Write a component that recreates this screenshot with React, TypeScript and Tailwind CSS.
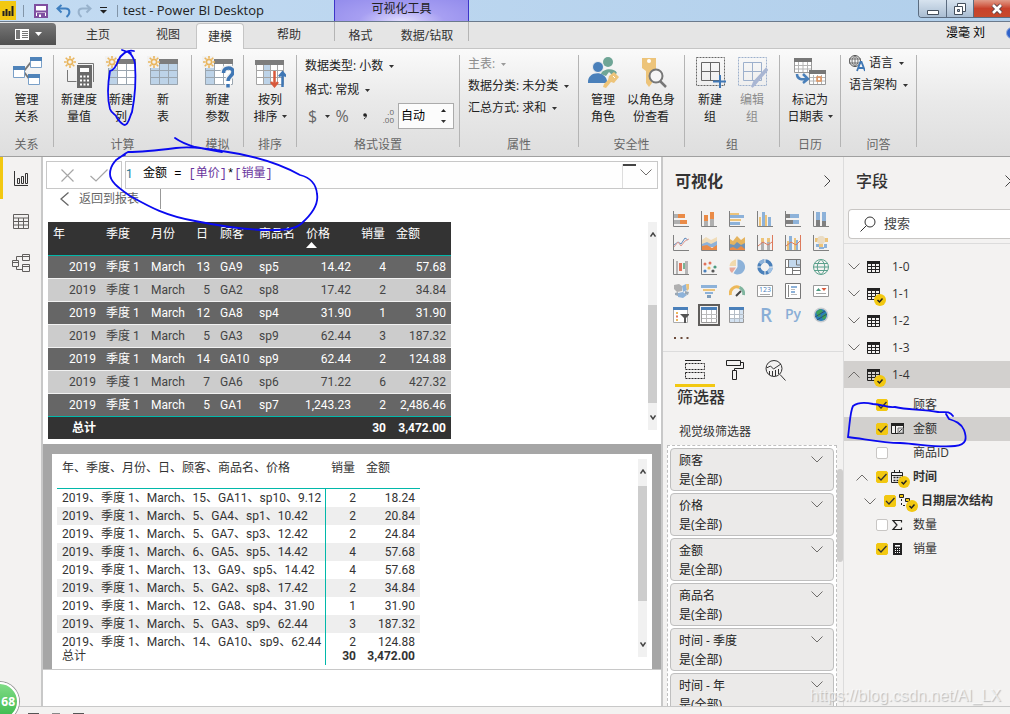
import React from "react";
import clsx from "clsx";

type IconProps = {
    children: React.ReactNode;
    width?: number;
    height?: number;
};

const Icon: React.FC<IconProps> = ({ children, width = 32, height = 32 }): React.ReactElement => (
    <svg width={width} height={height} viewBox={`0 0 ${width} ${height}`} fill="none" className="shrink-0" aria-hidden>
        {children}
    </svg>
);

const Caret: React.FC<{ muted?: boolean }> = ({ muted }): React.ReactElement => (
    <Icon width={5} height={3}>
        <path d="M0 0h5L2.500 3z" fill={muted ? "#9a9a9a" : "#333"} />
    </Icon>
);

const Chevron: React.FC<{ up?: boolean }> = ({ up }): React.ReactElement => (
    <Icon width={12} height={7}>
        <path d={up ? "M.5 6.500L6 1l5.500 5.500" : "M.5 .5L6 6l5.500-5.500"} stroke="#6f6d6b" />
    </Icon>
);

const Spark: React.FC = (): React.ReactElement => (
    <g stroke="#e9b65f" strokeWidth="1.600">
        <circle cx="7" cy="6" r="2.600" />
        <path d="M7 0v2.500M7 9.500V12M1 6h2.500M10.500 6H13M2.700 1.700l1.800 1.800M9.500 8.500l1.800 1.800M11.300 1.700L9.500 3.500M4.500 8.500L2.700 10.300" />
    </g>
);

const Grid: React.FC<{ fill: string; column?: boolean }> = ({ fill, column }): React.ReactElement => (
    <>
        <path d="M3 3h28v26H3z" fill={column ? "#fff" : fill} />
        {column && <path d="M3 8h9v21H3z" fill={fill} />}
        <path d="M3.500 8v20.500h27V8M12.500 8v20M21.500 8v20M4 14.500h27M4 21.500h27" stroke="#9aa5af" />
        <path d="M3 3h28v5H3z" fill="#7d7d7d" />
        <path d="M0 0h12v12H0z" fill="#f2f2f2" />
    </>
);

type RibbonButtonProps = {
    lines: [string, string];
    className: string;
    caret?: boolean;
    disabled?: boolean;
    children: React.ReactNode;
};

const RibbonButton: React.FC<RibbonButtonProps> = (props): React.ReactElement => (
    <button
        type="button"
        disabled={props.disabled}
        className={clsx(
            "flex flex-none flex-col items-center pt-[7px] leading-[17px] whitespace-nowrap",
            props.disabled && "text-[#8c8c8c]",
            props.className
        )}
    >
        <Icon>{props.children}</Icon>
        <span className="mt-[3px]">{props.lines[0]}</span>
        <span className="flex items-center gap-1">
            {props.lines[1]}
            {props.caret && <Caret />}
        </span>
    </button>
);

type RibbonGroupProps = {
    label: string;
    className: string;
    children: React.ReactNode;
};

const RibbonGroup: React.FC<RibbonGroupProps> = (props): React.ReactElement => (
    <>
        <section className={clsx("flex flex-none flex-col justify-between pb-[3px]", props.className)}>
            {props.children}
            <h2 className="text-center leading-4 text-[#666]">{props.label}</h2>
        </section>
        <span className="mt-[6px] h-[92px] w-px flex-none bg-[#b4b4b4]" />
    </>
);

const DropButton: React.FC<{ text: string; muted?: boolean }> = ({ text, muted }): React.ReactElement => (
    <button
        type="button"
        className={clsx("flex h-[22px] items-center gap-[6px] whitespace-nowrap", muted && "text-[#8c8c8c]")}
    >
        {text}
        <Caret muted={muted} />
    </button>
);

const TitleBar: React.FC = (): React.ReactElement => (
    <header className="flex h-[22px] flex-none items-stretch border-b border-[#6b7a8c] bg-linear-to-r from-[#c3dbf2] to-[#b1cfeb]">
        <div className="flex w-[334px] flex-none items-center">
            <Icon width={16} height={19}>
                <path d="M0 0h16v19H0z" fill="#f2c811" />
                <path d="M3.500 10v5M6.500 8v7M9.500 10v5M12.500 5v10" stroke="#222" strokeWidth="2" />
            </Icon>
            <span className="ml-[7px] h-3 w-px bg-[#8295a8]" />
            <button type="button" aria-label="保存" className="ml-[10px]">
                <Icon width={14} height={14}>
                    <path d="M1 1h12v12H1z" fill="#fff" stroke="#7f4fa0" strokeWidth="2" />
                    <path d="M1 7.500h12" stroke="#7f4fa0" strokeWidth="2" />
                    <path d="M3 9h8v4H3zM4 13v-3h3v3" fill="#7f4fa0" />
                    <path d="M5 10.500h2V13H5z" fill="#fff" />
                </Icon>
            </button>
            <button type="button" aria-label="撤消" className="ml-2">
                <Icon width={15} height={14}>
                    <path d="M5.500 1L1.500 4.500l4 4M1.500 4.500h8c5 0 5 5.500 1 8.500" stroke="#3f7fc0" strokeWidth="2" />
                </Icon>
            </button>
            <button type="button" aria-label="恢复" className="ml-[6px]">
                <Icon width={15} height={14}>
                    <path d="M9.500 1l4 3.500-4 4M13.500 4.500h-8c-5 0-5 5.500-1 8.500" stroke="#98b2cc" strokeWidth="2" />
                </Icon>
            </button>
            <button type="button" aria-label="自定义" className="ml-2">
                <Icon width={7} height={7}>
                    <path d="M0 0h7v1H0zM0 3h7L3.500 6.500z" fill="#222" />
                </Icon>
            </button>
            <span className="ml-[10px] h-3 w-px bg-[#8295a8]" />
            <h1 className="ml-[5px] text-[13px] leading-[21px] whitespace-nowrap text-[#222]">test - Power BI Desktop</h1>
        </div>
        <div className="w-[135px] flex-none border-x border-[#3d35c8] bg-[radial-gradient(ellipse_at_bottom,#e2defe_0%,#a79ff2_45%,#938cec_100%)] text-center leading-[18px] text-[#222]">
            可视化工具
        </div>
        <div className="flex flex-1 items-start justify-end">
            <div className="flex h-[18px] w-[92px] overflow-hidden rounded-bl border-b border-l border-[#5b6c80]">
                <button
                    type="button"
                    aria-label="最小化"
                    className="flex w-[28px] items-center justify-center border-r border-[#5b6c80] bg-linear-to-b from-[#d7e3ef] to-[#a9bdd2]"
                >
                    <Icon width={12} height={14}>
                        <path d="M.5 8.500h11v4H.5z" fill="#fff" stroke="#444f5c" />
                    </Icon>
                </button>
                <button
                    type="button"
                    aria-label="还原"
                    className="flex w-[27px] items-center justify-center border-r border-[#5b6c80] bg-linear-to-b from-[#d7e3ef] to-[#a9bdd2]"
                >
                    <Icon width={12} height={12}>
                        <path d="M3.500 .5h8v8h-8z" fill="#fff" stroke="#444f5c" />
                        <path d="M.5 3.500h8v8h-8z" fill="#fff" stroke="#444f5c" />
                        <path d="M3.500 6.500h2v2h-2z" fill="#a9bdd2" stroke="#444f5c" />
                    </Icon>
                </button>
                <button
                    type="button"
                    aria-label="关闭"
                    className="flex flex-1 items-center justify-center bg-linear-to-b from-[#e09a88] via-[#c8412b] to-[#c64a2c] pl-[10px]"
                >
                    <Icon width={12} height={12}>
                        <path d="M2 2l8 8M10 2l-8 8" stroke="#5a4145" strokeWidth="4.500" />
                        <path d="M2 2l8 8M10 2l-8 8" stroke="#fff" strokeWidth="2.600" />
                    </Icon>
                </button>
            </div>
        </div>
    </header>
);

const TabRow: React.FC = (): React.ReactElement => (
    <nav className="flex h-[27px] flex-none border-b border-[#c5c5c5] bg-[#e5e5e5]">
        <button
            type="button"
            aria-label="文件"
            className="mt-px flex h-[22px] w-14 flex-none items-center justify-center gap-[6px] rounded-tr-sm bg-linear-to-b from-[#777] to-[#505050]"
        >
            <Icon width={14} height={11}>
                <path d="M0 0h14v11H0z" fill="#fff" />
                <path d="M1 1h4v9H1z" fill="#777" />
                <path d="M7 2.500h6M7 4.500h6M7 6.500h6M7 8.500h6" stroke="#777" />
            </Icon>
            <Icon width={7} height={4}>
                <path d="M0 0h7L3.500 4z" fill="#fff" />
            </Icon>
        </button>
        <button type="button" className="w-[84px] flex-none">
            主页
        </button>
        <button type="button" className="w-14 flex-none">
            视图
        </button>
        <button
            type="button"
            className="mt-px -mb-px w-12 flex-none rounded-t border border-b-0 border-[#c5c5c5] bg-[#fafafa]"
        >
            建模
        </button>
        <button type="button" className="w-[90px] flex-none">
            帮助
        </button>
        <div className="mb-[7px] flex flex-none border-x border-[#b4b4b4]">
            <button type="button" className="mt-[6px] w-[51px]">
                格式
            </button>
            <button type="button" className="mt-[6px] w-[82px]">
                数据/钻取
            </button>
        </div>
        <div className="-mr-1 flex flex-1 items-center justify-end gap-[21px] overflow-hidden pb-1">
            <span className="whitespace-nowrap text-black">漫毫 刘</span>
            <Icon width={8} height={12}>
                <circle cx="6" cy="6" r="5.500" fill="#2f62c9" stroke="#8fa9dd" />
            </Icon>
        </div>
    </nav>
);

const Ribbon: React.FC = (): React.ReactElement => (
    <div className="flex h-[108px] flex-none border-b border-[#a0a0a0] bg-linear-to-b from-[#fafafa] via-[#e9e9e9] to-[#dedede] text-[#222]">
        <RibbonGroup label="关系" className="w-[53px]">
            <RibbonButton lines={["管理", "关系"]} className="w-full">
                <path d="M13 15l7-9M13 16l6 8" stroke="#777" strokeWidth="2" />
                <path d="M19.500 1.500h11v10h-11zM2.500 10.500h11v11h-11zM17.500 18.500h11v10h-11z" fill="#fff" stroke="#7aa0c8" />
                <path d="M19 1h12v4H19zM2 10h12v4H2zM17 18h12v4H17z" fill="#4f83b9" />
            </RibbonButton>
        </RibbonGroup>
        <RibbonGroup label="计算" className="w-[137px]">
            <div className="flex pl-1">
                <RibbonButton lines={["新建度", "量值"]} className="w-[42px]">
                    <Spark />
                    <path d="M4.500 14v11.500h9M15 7.500h15.500V26" stroke="#777" />
                    <path d="M14 9h15v23H14z" fill="#6a6a6a" />
                    <path d="M17 12h9v4h-9z" fill="#fff" />
                    <path d="M17 20.500h9M17 24.500h9M17 28.500h9" stroke="#fff" strokeWidth="2" strokeDasharray="2 1.500" />
                </RibbonButton>
                <RibbonButton lines={["新建", "列"]} className="w-[42px]">
                    <Grid fill="#bdd3e8" column />
                    <Spark />
                </RibbonButton>
                <RibbonButton lines={["新", "表"]} className="w-[42px]">
                    <Grid fill="#bdd3e8" />
                    <Spark />
                </RibbonButton>
            </div>
        </RibbonGroup>
        <RibbonGroup label="模拟" className="w-[51px]">
            <RibbonButton lines={["新建", "参数"]} className="w-full">
                <Grid fill="#bdd3e8" column />
                <Spark />
                <path d="M21 17c0-7 10-7 10-1 0 4-5 4-5 9M26 28v4" stroke="#f0f0f0" strokeWidth="6" />
                <path d="M21.500 17c0-7 10-6 9.500-1 0 4-5 4-5 9M26 28v3.500" stroke="#3f77b5" strokeWidth="3.500" />
            </RibbonButton>
        </RibbonGroup>
        <RibbonGroup label="排序" className="w-[52px]">
            <RibbonButton lines={["按列", "排序"]} className="w-full" caret>
                <path d="M2 4h28v24H2z" fill="#fff" />
                <path d="M9 8h7v20H9z" fill="#bdd3e8" />
                <path d="M2.500 8v20.500h27V8M9.500 8v20M16.500 8v20M23.500 8v20M3 14.500h27M3 21.500h27" stroke="#a5a5a5" />
                <path d="M1 4h29v5H1z" fill="#7d7d7d" />
                <path d="M20.500 15v15M17 26l3.500 4 3.500-4" stroke="#d8593b" strokeWidth="2.500" />
                <path d="M28.500 31V17M25 20.500l3.500-4 3.500 4" stroke="#3f77b5" strokeWidth="2.500" />
            </RibbonButton>
        </RibbonGroup>
        <RibbonGroup label="格式设置" className="w-[162px]">
            <div className="pt-[6px] pl-2">
                <DropButton text="数据类型: 小数" />
                <div className="pt-[2px]">
                    <DropButton text="格式: 常规" />
                </div>
                <div className="mt-[2px] flex h-[26px] items-center text-base leading-[26px] text-[#666]">
                    <button type="button" className="flex w-7 items-center gap-2 pl-[3px]">
                        $<Caret />
                    </button>
                    <button type="button" className="ml-[1px] w-4">
                        %
                    </button>
                    <button type="button" aria-label="千位分隔符" className="ml-[10px] w-[10px]">
                        <Icon width={10} height={12}>
                            <circle cx="5" cy="5" r="1.800" fill="#222" />
                            <path d="M6.300 5c.3 2-.8 3.200-2.300 4" stroke="#222" />
                        </Icon>
                    </button>
                    <label htmlFor="decimals" className="ml-[9px] flex w-[19px] flex-col pr-1 text-right text-[8px] leading-[8px]">
                        <span>.0</span>
                        <span>.00</span>
                    </label>
                    <div className="flex h-[26px] w-14 items-center border border-[#ababab] bg-[#fcfcfc] pl-[2px]">
                        <input id="decimals" defaultValue="自动" className="w-10 min-w-0 text-xs text-black outline-none" />
                        <div className="flex flex-col gap-2">
                            <button type="button" aria-label="增加">
                                <Icon width={5} height={3}>
                                    <path d="M0 3h5L2.500 0z" fill="#222" />
                                </Icon>
                            </button>
                            <button type="button" aria-label="减少">
                                <Caret />
                            </button>
                        </div>
                    </div>
                </div>
            </div>
        </RibbonGroup>
        <RibbonGroup label="属性" className="w-[118px]">
            <div className="pt-1 pl-2">
                <DropButton text="主表: " muted />
                <DropButton text="数据分类: 未分类" />
                <DropButton text="汇总方式: 求和" />
            </div>
        </RibbonGroup>
        <RibbonGroup label="安全性" className="w-[105px]">
            <div className="flex">
                <RibbonButton lines={["管理", "角色"]} className="w-12">
                    <circle cx="21" cy="6" r="5" fill="#6fa596" />
                    <path d="M14 18c2-6 14-6 16-1l-4 3-4-4-3 4z" fill="#6fa596" />
                    <circle cx="11" cy="11" r="5.500" fill="#4a80ba" stroke="#f0f0f0" />
                    <path d="M1 27c-1-12 17-13 19-2v2z" fill="#4a80ba" />
                    <path d="M27 16l5 5-5 6-3-1-5 6-3-1 1-3 4-4 1-4z" fill="#edc47a" />
                    <path d="M26 20l2 2" stroke="#fff" />
                </RibbonButton>
                <RibbonButton lines={["以角色身", "份查看"]} className="w-12">
                    <path d="M7 2h14v11l-4 2v12l-3 4-3-4V15l-4-3z" fill="#edc47a" />
                    <circle cx="14" cy="5" r="2" fill="#fff" />
                    <circle cx="21" cy="20" r="6.500" fill="#f6f6f6" stroke="#777" strokeWidth="2" />
                    <path d="M25 25l6 6" stroke="#777" strokeWidth="2.500" />
                </RibbonButton>
            </div>
        </RibbonGroup>
        <RibbonGroup label="组" className="w-[94px]">
            <div className="flex pl-1">
                <RibbonButton lines={["新建", "组"]} className="w-[42px]">
                    <path d="M2.500 1.500h28v28h-28z" stroke="#666" strokeDasharray="2 1" />
                    <path d="M7.500 6.500h18v18h-18zM16.500 7v17M8 15.500h18" stroke="#666" />
                    <path d="M26 19v13M19 25.500h13" stroke="#3f77b5" strokeWidth="2" />
                </RibbonButton>
                <RibbonButton lines={["编辑", "组"]} className="w-[42px]" disabled>
                    <path d="M2.500 1.500h28v28h-28z" stroke="#9db0cc" strokeDasharray="2 1" />
                    <path d="M7.500 6.500h18v18h-18zM16.500 7v17M8 15.500h18" stroke="#9db0cc" />
                    <path d="M31 14L20 27l-4 4 2-5 12-13z" fill="#a9b6d3" stroke="#a9b6d3" strokeWidth="2" />
                </RibbonButton>
            </div>
        </RibbonGroup>
        <RibbonGroup label="日历" className="w-[60px]">
            <RibbonButton lines={["标记为", "日期表"]} className="w-full" caret>
                <path d="M.5 2.500h17v14H.5zM15.500 15.500h16v13h-16z" fill="#fff" stroke="#999" />
                <path d="M4.500 6v10M9 6v10M13.500 6v10M1 9.500h16M1 13h16M19.500 19v9M23.500 19v9M27.500 19v9M16 21.500h15M16 25h15" stroke="#b5b5b5" />
                <path d="M0 2h18v4H0zM15 14h17v4H15z" fill="#777" />
                <path d="M23 21h4v4h-4z" stroke="#e0915b" strokeWidth="1.500" />
                <path d="M3 18c0 5 4 6 10 5M9 18l5 5-5 4" stroke="#4a80ba" strokeWidth="2.500" />
            </RibbonButton>
        </RibbonGroup>
        <RibbonGroup label="问答" className="w-[75px]">
            <div className="pt-[3px] pl-2">
                <div className="flex items-center gap-1">
                    <Icon width={16} height={17}>
                        <circle cx="6" cy="6" r="5.500" stroke="#555" />
                        <path d="M6 .5c-4 3-4 8 0 11M6 .5c4 3 4 8 0 11M0 4h12M0 8h12M6 0v12" stroke="#555" strokeWidth=".8" />
                        <path d="M8 16l3.500-9h1L16 16M9.500 13h5" stroke="#3f77b5" strokeWidth="1.800" />
                    </Icon>
                    <DropButton text="语言" />
                </div>
                <DropButton text="语言架构" />
            </div>
        </RibbonGroup>
    </div>
);

const NavRail: React.FC = (): React.ReactElement => (
    <aside className="flex w-[43px] flex-none flex-col border-r-2 border-[#c8c8c8] bg-[#f3f2f1]">
        <button
            type="button"
            aria-label="报表"
            className="flex h-[42px] items-center justify-center border-l-3 border-[#f2c811] pr-[3px]"
        >
            <Icon width={14} height={15}>
                <path d="M.5 0v14.500H14M3.500 7.500h2v5h-2zM7.500 5.500h2v7h-2zM11.500 2.500h2v10h-2z" stroke="#333" />
            </Icon>
        </button>
        <button type="button" aria-label="数据" className="flex h-[44px] items-center justify-center">
            <Icon width={16} height={15}>
                <path d="M.5 .5h15v14H.5zM.5 4h15M.5 7.500h15M.5 11h15M5.500 4v11M10.500 4v11" stroke="#605e5c" />
            </Icon>
        </button>
        <button type="button" aria-label="模型" className="flex h-10 items-center justify-center">
            <Icon width={18} height={18}>
                <path
                    d="M10.500 .5h7v6h-7zM10.500 2.500h7M.5 6.500h6v6h-6zM.5 8.500h6M10.500 10.500h7v7h-7zM10.500 12.500h7M4.500 6.500v-4h6M4.500 12.500v3h6"
                    stroke="#605e5c"
                />
            </Icon>
        </button>
    </aside>
);

const salesColumns = ["年", "季度", "月份", "日", "顾客", "商品名", "价格", "销量", "金额"];

const salesRows = [
    ["2019", "季度 1", "March", "13", "GA9", "sp5", "14.42", "4", "57.68"],
    ["2019", "季度 1", "March", "5", "GA2", "sp8", "17.42", "2", "34.84"],
    ["2019", "季度 1", "March", "12", "GA8", "sp4", "31.90", "1", "31.90"],
    ["2019", "季度 1", "March", "5", "GA3", "sp9", "62.44", "3", "187.32"],
    ["2019", "季度 1", "March", "14", "GA10", "sp9", "62.44", "2", "124.88"],
    ["2019", "季度 1", "March", "7", "GA6", "sp6", "71.22", "6", "427.32"],
    ["2019", "季度 1", "March", "5", "GA1", "sp7", "1,243.23", "2", "2,486.46"],
];

const isNumberColumn = (index: number): boolean => [0, 3, 6, 7, 8].includes(index);

const SalesTable: React.FC = (): React.ReactElement => (
    <table className="w-[403px] table-fixed border-separate border-spacing-0 whitespace-nowrap">
        <colgroup>
            <col className="w-[53px]" />
            <col className="w-[45px]" />
            <col className="w-[45px]" />
            <col className="w-[24px]" />
            <col className="w-[39px]" />
            <col className="w-[47px]" />
            <col className="w-[55px]" />
            <col className="w-[35px]" />
            <col className="w-[60px]" />
        </colgroup>
        <thead className="bg-[#333] text-white">
            <tr className="h-[34px]">
                {salesColumns.map((name) => (
                    <th
                        key={name}
                        className="border-b border-[#01b8aa] px-[5px] pt-1 text-left align-top font-normal"
                    >
                        <span className="block leading-4">{name}</span>
                        {name === "价格" && (
                            <Icon width={11} height={6}>
                                <path d="M0 6h11L5.500 0z" fill="#fff" />
                            </Icon>
                        )}
                    </th>
                ))}
            </tr>
        </thead>
        <tbody>
            {salesRows.map((row, rowIndex) => (
                <tr
                    key={rowIndex}
                    className={clsx("h-[23px]", rowIndex % 2 === 0 ? "bg-[#666] text-white" : "bg-[#ccc] text-[#444]")}
                >
                    {row.map((cell, index) => (
                        <td
                            key={index}
                            className={clsx(
                                "border-b px-1 leading-[18px]",
                                rowIndex === salesRows.length - 1 ? "border-[#01b8aa]" : "border-[#f2f2f2]",
                                isNumberColumn(index) ? "pr-[5px] text-right" : "pl-[5px]"
                            )}
                        >
                            {cell}
                        </td>
                    ))}
                </tr>
            ))}
        </tbody>
        <tfoot className="bg-[#333] font-bold text-white">
            <tr className="h-[22px]">
                <td className="px-[5px] text-right leading-[18px]">总计</td>
                <td colSpan={6} />
                <td className="px-[5px] text-right leading-[18px]">30</td>
                <td className="px-[5px] text-right leading-[18px]">3,472.00</td>
            </tr>
        </tfoot>
    </table>
);

const pivotRows = [
    ["2019、季度 1、March、15、GA11、sp10、9.12", "2", "18.24"],
    ["2019、季度 1、March、5、GA4、sp1、10.42", "2", "20.84"],
    ["2019、季度 1、March、5、GA7、sp3、12.42", "2", "24.84"],
    ["2019、季度 1、March、6、GA5、sp5、14.42", "4", "57.68"],
    ["2019、季度 1、March、13、GA9、sp5、14.42", "4", "57.68"],
    ["2019、季度 1、March、5、GA2、sp8、17.42", "2", "34.84"],
    ["2019、季度 1、March、12、GA8、sp4、31.90", "1", "31.90"],
    ["2019、季度 1、March、5、GA3、sp9、62.44", "3", "187.32"],
    ["2019、季度 1、March、14、GA10、sp9、62.44", "2", "124.88"],
];

const PivotColumns: React.FC = (): React.ReactElement => (
    <colgroup>
        <col className="w-[269px]" />
        <col className="w-[35px]" />
        <col className="w-[59px]" />
    </colgroup>
);

const PivotTable: React.FC = (): React.ReactElement => (
    <div className="w-[363px] text-[#333]">
        <div className="h-[188px] overflow-hidden">
            <table className="w-full table-fixed border-separate border-spacing-0 whitespace-nowrap">
                <PivotColumns />
                <thead>
                    <tr className="h-[30px]">
                        {["年、季度、月份、日、顾客、商品名、价格", "销量", "金额"].map((name) => (
                            <th
                                key={name}
                                className="border-b border-[#01b8aa] px-[5px] text-left align-top leading-[18px] font-normal"
                            >
                                {name}
                            </th>
                        ))}
                    </tr>
                </thead>
                <tbody>
                    {pivotRows.map((row) => (
                        <tr key={row[0]} className="h-[18px] leading-[18px] even:bg-[#eee]">
                            <td className="border-r border-[#01b8aa] pl-[5px]">{row[0]}</td>
                            <td className="px-[5px] text-right">{row[1]}</td>
                            <td className="px-[5px] text-right">{row[2]}</td>
                        </tr>
                    ))}
                </tbody>
            </table>
        </div>
        <table className="w-full table-fixed border-separate border-spacing-0 leading-[18px]">
            <PivotColumns />
            <tbody>
                <tr>
                    <td className="border-r border-[#01b8aa] px-[5px]">总计</td>
                    <td className="px-[5px] text-right font-bold">30</td>
                    <td className="px-[5px] text-right font-bold">3,472.00</td>
                </tr>
            </tbody>
        </table>
    </div>
);

const ScrollBar: React.FC<{ thumbClass: string; className: string }> = (props): React.ReactElement => (
    <div className={clsx("flex w-[9px] flex-none flex-col items-center bg-[#f1f1f1] py-[10px]", props.className)}>
        <Icon width={6} height={5}>
            <path d="M.5 4.500L3 1l2.500 3.500" stroke="#444" strokeWidth="1.500" />
        </Icon>
        <div className="flex w-full flex-1 flex-col">
            <div className={clsx("w-full bg-[#cdcdcd]", props.thumbClass)} />
        </div>
        <Icon width={6} height={5}>
            <path d="M.5 .5L3 4 5.500 .5" stroke="#444" strokeWidth="1.500" />
        </Icon>
    </div>
);

const Canvas: React.FC = (): React.ReactElement => (
    <main className="flex min-w-0 flex-1 flex-col border-r-2 border-[#c8c8c8] bg-white">
        <div className="mt-1 flex h-7 flex-none gap-[3px] pr-[3px] pl-[3px]">
            <div className="flex w-[76px] flex-none items-center justify-center gap-4 border border-[#c8c8c8]">
                <button type="button" aria-label="取消">
                    <Icon width={13} height={13}>
                        <path d="M.5 .5l12 12M12.500 .5l-12 12" stroke="#a6a6a6" strokeWidth="1.200" />
                    </Icon>
                </button>
                <button type="button" aria-label="提交">
                    <Icon width={18} height={13}>
                        <path d="M.5 7l5.500 5L17.500 .5" stroke="#a6a6a6" strokeWidth="1.200" />
                    </Icon>
                </button>
            </div>
            <div className="flex min-w-0 flex-1 border border-[#c8c8c8] bg-[#fefefe]">
                <span className="w-[17px] flex-none pt-1 leading-4 text-[#237893]">1</span>
                <div
                    role="textbox"
                    aria-label="公式"
                    contentEditable
                    suppressContentEditableWarning
                    className="flex-1 pt-1 font-['Liberation_Mono','Noto_Sans_CJK_SC',monospace] leading-4 whitespace-pre text-black outline-none"
                >
                    金额 = <span className="text-[#68349c]">[单价]</span>*<span className="text-[#68349c]">[销量]</span>
                </div>
                <div className="mt-[2px] flex w-[35px] flex-none border-l border-[#ddd]">
                    <span className="h-[2px] w-[13px] bg-[#444]" />
                    <button type="button" aria-label="展开公式栏" className="mb-2 ml-1">
                        <Chevron />
                    </button>
                </div>
            </div>
        </div>
        <div className="flex h-[33px] flex-none">
            <button
                type="button"
                className="flex h-[20px] w-[118px] flex-none items-center gap-[10px] border-r border-[#999] pl-[17px] whitespace-nowrap text-[#666]"
            >
                <Icon width={9} height={14}>
                    <path d="M8.500 .5L1 7l7.500 6.500" stroke="#666" strokeWidth="1.300" />
                </Icon>
                返回到报表
            </button>
        </div>
        <div className="flex h-[222px] flex-none items-start justify-between pr-1 pl-[5px]">
            <SalesTable />
            <ScrollBar className="h-[208px]" thumbClass="mt-[68px] h-[98px]" />
        </div>
        <div className="flex-none border-b border-[#c8c8c8] bg-[#a6a6a6] px-[9px] pt-[10px]">
            <div className="flex h-[215px] items-start justify-between bg-white px-[5px] pt-[5px]">
                <PivotTable />
                <ScrollBar className="h-[198px]" thumbClass="mt-3 h-[115px]" />
            </div>
        </div>
    </main>
);

const axis = <path d="M.5 0v15.500H16" stroke="#808080" />;

const visuals: { name: string; art: React.ReactNode }[] = [
    {
        name: "堆积条形图",
        art: (
            <>
                <path d="M1 3h4v4H1zM1 9h6v4H1z" fill="#b0b0b0" />
                <path d="M5 3h7v4H5zM7 9h7v4H7z" fill="#ea8b47" />
                {axis}
            </>
        ),
    },
    {
        name: "堆积柱形图",
        art: (
            <>
                <path d="M3 10h4v5H3zM9 8h4v7H9z" fill="#b0b0b0" />
                <path d="M3 4h4v6H3zM9 1h4v7H9z" fill="#ea8b47" />
                {axis}
            </>
        ),
    },
    {
        name: "簇状条形图",
        art: (
            <>
                <path d="M1 2h9v2H1zM1 8h11v2H1z" fill="#edc47a" />
                <path d="M1 4h14v3H1zM1 11h10v3H1z" fill="#8db2d9" />
                {axis}
            </>
        ),
    },
    {
        name: "簇状柱形图",
        art: (
            <>
                <path d="M2 6h2v9H2zM8 4h2v11H8z" fill="#edc47a" />
                <path d="M5 1h3v14H5zM11 6h3v9h-3z" fill="#8db2d9" />
                {axis}
            </>
        ),
    },
    {
        name: "百分比堆积条形图",
        art: (
            <>
                <path d="M1 3h4v4H1zM1 9h7v4H1z" fill="#808080" />
                <path d="M5 3h9v4H5zM8 9h6v4H8z" fill="#8db2d9" />
                {axis}
            </>
        ),
    },
    {
        name: "百分比堆积柱形图",
        art: (
            <>
                <path d="M3 9h4v6H3zM9 10h4v5H9z" fill="#808080" />
                <path d="M3 1h4v8H3zM9 1h4v9H9z" fill="#8db2d9" />
                {axis}
            </>
        ),
    },
    {
        name: "折线图",
        art: (
            <>
                <path d="M1 10l4-3 3 2 4-6 3 2" stroke="#5b87ba" />
                <path d="M1 12l4-5 3 4 4-5 4-2" stroke="#dd9a92" />
                {axis}
            </>
        ),
    },
    {
        name: "分区图",
        art: (
            <>
                <path d="M1 5l4-3 5 3 6-3v9H1z" fill="#f0dcb8" />
                <path d="M1 9l5-2 4 2 6-3v6H1z" fill="#8db2d9" />
                <path d="M1 11l5-1 5 3 5-3v5H1z" fill="#ea8b47" />
                {axis}
            </>
        ),
    },
    {
        name: "堆积面积图",
        art: (
            <>
                <path d="M1 4l3 2 4-5 4 4 4-3v13H1z" fill="#e5b45f" />
                <path d="M1 9l4 1 3-3 4 3 4-2v7H1z" fill="#6f93b8" />
                <path d="M1 13l3-1 4 2 4-3 4 3v1H1z" fill="#ea8b47" />
                {axis}
            </>
        ),
    },
    {
        name: "折线和堆积柱形图",
        art: (
            <>
                <path d="M4 3h3v4H4zM10 3h3v4h-3z" fill="#edc47a" />
                <path d="M4 7h3v8H4zM10 7h3v8h-3z" fill="#b0b0b0" />
                <path d="M1 11l5-4 5 3 4-3M15.500 0v16" stroke="#dd7a5c" />
                {axis}
            </>
        ),
    },
    {
        name: "折线和簇状柱形图",
        art: (
            <>
                <path d="M2 6h2v9H2zM9 3h2v12H9z" fill="#edc47a" />
                <path d="M4 1h3v14H4zM11 5h2v10h-2z" fill="#8db2d9" />
                <path d="M1 11l5-4 5 3 4-4M15.500 0v16" stroke="#dd7a5c" />
                {axis}
            </>
        ),
    },
    {
        name: "功能区图表",
        art: (
            <>
                <path d="M2 3h3v4H2zM6 9h4v3H6zM11 3h4v4h-4z" fill="#edc47a" />
                <path d="M3 9h3v3H3zM6 12h5v2H6zM11 9h3v4h-3z" fill="#8db2d9" />
                <path d="M5 2l2-1h3l2 2v4l-2 2H6L4 7z" fill="#eadcc4" />
                {axis}
            </>
        ),
    },
    {
        name: "瀑布图",
        art: (
            <>
                <path d="M3 2h2v13H3zM12 2h3v13h-3z" fill="#b5b5b5" />
                <path d="M6 4h3v8H6z" fill="#e1725a" />
                <path d="M10 4h2v6h-2z" fill="#79b394" />
                {axis}
            </>
        ),
    },
    {
        name: "散点图",
        art: (
            <>
                <circle cx="4" cy="5" r="1.500" fill="#e1725a" />
                <circle cx="9" cy="4" r="1.500" fill="#e1725a" />
                <circle cx="8" cy="9" r="1.600" fill="#edb95a" />
                <circle cx="14" cy="8" r="1.600" fill="#4c9a80" />
                <circle cx="4" cy="12" r="1.600" fill="#4a80ba" />
                <circle cx="12" cy="12" r="1.600" fill="#555" />
                {axis}
            </>
        ),
    },
    {
        name: "饼图",
        art: (
            <>
                <path d="M8.500 8V.5a7.500 7.500 0 11-4 13.800z" fill="#8db2d9" />
                <path d="M7 7H.5C1 3 4 1 7 .5z" fill="#f0d9ad" />
                <path d="M7 8.500l-4 5.500C1 12.500.5 11 .5 8.500z" fill="#e8a79a" />
            </>
        ),
    },
    {
        name: "环形图",
        art: (
            <>
                <circle cx="8" cy="8" r="6" stroke="#4a80ba" strokeWidth="3.500" />
                <path d="M3 4.500A6 6 0 018 2" stroke="#8db2d9" strokeWidth="3.500" />
                <path d="M14 8a6 6 0 01-3 5" stroke="#9ec1e5" strokeWidth="3.500" />
                <path d="M8 0v4M0 8h4M12 8h4M8 12v4" stroke="#f3f2f1" />
            </>
        ),
    },
    {
        name: "树状图",
        art: (
            <>
                <path d="M.5 .5h15v15H.5z" fill="#fff" stroke="#777" />
                <path d="M4 1h11v7H4z" fill="#c2d7ec" />
                <path d="M3.500 1v8M1 8.500h15M11.500 1v5H15M7.500 9v6M8 11.500h8" stroke="#777" />
            </>
        ),
    },
    {
        name: "地图",
        art: (
            <path
                d="M8 .5a7.500 7.500 0 100 15 7.500 7.500 0 000-15zM8 .5c-5 4-5 11 0 15M8 .5c5 4 5 11 0 15M1.500 4.500h13M.5 8h15M1.500 11.500h13"
                stroke="#5ba08c"
            />
        ),
    },
    {
        name: "着色地图",
        art: (
            <>
                <path d="M1 2l5-1 3 2v5L4 9 1 6z" fill="#b0b0b0" />
                <path d="M9 3l4-2 1 6-4 2zM5 10l5-1 4 3-4 3-5-1z" fill="#8db2d9" />
                <path d="M13 1h3v5l-2 2z" fill="#edc47a" />
                <path d="M2 10l3-1v4l-3-1zM12 8l4 1-1 3-3-1z" fill="#9aa7b3" />
            </>
        ),
    },
    {
        name: "漏斗图",
        art: (
            <>
                <path d="M0 2h16v3H0zM4 9h8v2H4z" fill="#8db2d9" />
                <path d="M2 6h12v2H2z" fill="#edc47a" />
                <path d="M6 12h4v3H6z" fill="#7e9dbb" />
            </>
        ),
    },
    {
        name: "仪表",
        art: (
            <>
                <path d="M1.500 12a6.500 6.500 0 019-7.500" stroke="#edb95a" strokeWidth="3" />
                <path d="M10.500 4.500A6.500 6.500 0 0114.500 12" stroke="#80b59f" strokeWidth="3" />
                <path d="M7 13l5-5" stroke="#444" strokeWidth="2" />
            </>
        ),
    },
    {
        name: "卡片图",
        art: (
            <>
                <path d="M.5 2.500h15v11H.5z" fill="#fff" stroke="#999" />
                <text x="8" y="9" textAnchor="middle" fontSize="7" fill="#4a80ba">
                    123
                </text>
                <path d="M3 11.500h10" stroke="#aaa" />
            </>
        ),
    },
    {
        name: "多行卡",
        art: (
            <>
                <path d="M.5 .5h15v15H.5z" fill="#fff" stroke="#777" />
                <path d="M3.500 2v12" stroke="#888" />
                <path d="M6 4h6M6 9h4" stroke="#8db2d9" strokeWidth="2" />
                <path d="M6 6.500h4M6 11.500h6" stroke="#bbb" />
            </>
        ),
    },
    {
        name: "KPI",
        art: (
            <>
                <path d="M.5 2.500h15v11H.5z" fill="#fff" stroke="#999" />
                <path d="M3 8l2.500-3L8 8z" fill="#4c9a80" />
                <path d="M8.500 5h5L11 8z" fill="#d8593b" />
                <path d="M3 10.500h10" stroke="#aaa" />
            </>
        ),
    },
    {
        name: "切片器",
        art: (
            <>
                <path d="M.5 .5h14v15H.5z" fill="#fff" stroke="#aaa" />
                <path d="M0 0h15v3H0z" fill="#4a80ba" />
                <path d="M3 5h2v2H3zM3 12h2v2H3z" fill="#edb95a" />
                <path d="M3 8.500h2v2H3z" fill="#e1725a" />
                <path d="M7 7h10l-4 4v5h-2v-5z" fill="#555" />
            </>
        ),
    },
    {
        name: "表",
        art: (
            <>
                <path d="M.5 .5h15v15H.5z" fill="#fff" stroke="#999" />
                <path d="M5.500 3v12M10.500 3v12M1 7.500h15M1 11.500h15" stroke="#bbb" />
                <path d="M0 0h16v3H0z" fill="#4a80ba" />
            </>
        ),
    },
    {
        name: "矩阵",
        art: (
            <>
                <path d="M.5 .5h14v15H.5z" fill="#d3e2f1" stroke="#999" />
                <path d="M1 3h9v8H1z" fill="#fff" />
                <path d="M5.500 3v12M10.500 3v12M1 7.500h14M1 11.500h14" stroke="#b5bdc6" />
                <path d="M0 0h15v3H0z" fill="#4a80ba" />
            </>
        ),
    },
    {
        name: "R 脚本视觉对象",
        art: (
            <text x="9" y="15" textAnchor="middle" fontSize="19" fontWeight="600" fill="#8aaed6">
                R
            </text>
        ),
    },
    {
        name: "Python 视觉对象",
        art: (
            <text x="8" y="12" textAnchor="middle" fontSize="14" fontWeight="600" fill="#8aaed6">
                Py
            </text>
        ),
    },
    {
        name: "ArcGIS 地图",
        art: (
            <>
                <circle cx="8" cy="8" r="7.500" fill="#c9cdd0" />
                <circle cx="8" cy="8" r="6" fill="#2a7db8" />
                <path d="M3 5l4-3 3 2-3 3 1 2-3 1zM9 9l4-3v5l-3 2z" fill="#3fa35c" />
                <path d="M2 10l10-6M4 13l10-6" stroke="#2d4a5e" strokeWidth=".8" />
            </>
        ),
    },
];

const filters = ["顾客", "价格", "金额", "商品名", "时间 - 季度", "时间 - 年"];

const VisualPane: React.FC = (): React.ReactElement => (
    <aside className="flex w-[180px] flex-none flex-col overflow-hidden bg-[#f3f2f1]">
        <div className="mt-3 flex flex-none items-center justify-between pr-3 pl-3 leading-5">
            <h2 className="text-base font-bold text-[#333]">可视化</h2>
            <button type="button" aria-label="折叠可视化">
                <Icon width={7} height={12}>
                    <path d="M.5 .5L6 6l-5.500 5.500" stroke="#444" />
                </Icon>
            </button>
        </div>
        <div className="mt-[18px] grid flex-none grid-cols-6 gap-x-3 gap-y-2 pr-[14px] pl-[10px]">
            {visuals.map((visual) => (
                <button
                    type="button"
                    key={visual.name}
                    aria-label={visual.name}
                    className={clsx("h-4 w-4", visual.name === "表" && "outline-2 outline-offset-1 outline-[#605e5c]")}
                >
                    <Icon width={16} height={16}>
                        {visual.art}
                    </Icon>
                </button>
            ))}
        </div>
        <div className="h-[29px] flex-none border-b border-[#dcdcdc] pt-[14px] pl-[11px]">
            <button type="button" aria-label="更多" className="block">
                <Icon width={16} height={2}>
                    <path d="M0 1h2M6.500 1h2M12.500 1h2" stroke="#6b4a3a" strokeWidth="2" />
                </Icon>
            </button>
        </div>
        <div className="mt-1 flex flex-none pl-3">
            <button type="button" aria-label="字段" className="flex h-[31px] w-10 items-center justify-center border-b-3 border-[#f2c811]">
                <Icon width={20} height={20}>
                    <path d="M0 .5h16" stroke="#222" />
                    <path d="M.5 3.500h19v6H.5zM.5 12.500h19v6H.5z" stroke="#222" strokeDasharray="2 1" />
                </Icon>
            </button>
            <button type="button" aria-label="格式" className="flex h-[31px] w-10 items-center justify-center border-b-3 border-transparent">
                <Icon width={18} height={20}>
                    <path d="M.5 .5h14v5H.5zM14.500 2.500h3v6h-9v2M6.500 10.500h4v9h-4z" stroke="#222" />
                </Icon>
            </button>
            <button type="button" aria-label="分析" className="flex h-[31px] w-10 items-center justify-center border-b-3 border-transparent">
                <Icon width={21} height={21}>
                    <circle cx="9" cy="8.500" r="8" stroke="#333" />
                    <path d="M15 14.500l5.500 6M1.500 8l4-2 3 3L16 4M4.500 15V11M7.500 16v-5M10.500 16v-6M13.500 14V9" stroke="#333" />
                </Icon>
            </button>
        </div>
        <h2 className="flex-none pl-[14px] text-base leading-[20px] font-medium text-[#333]">筛选器</h2>
        <h3 className="mt-4 flex-none pl-4 leading-[18px] text-[#333]">视觉级筛选器</h3>
        <div className="mt-1 flex min-h-0 flex-1 pl-1">
            <ul className="flex min-h-0 w-[170px] flex-none flex-col gap-[2px] overflow-hidden border border-b-0 border-dashed border-[#c0c0c0] bg-white p-[2px]">
                {filters.map((name) => (
                    <li
                        key={name}
                        className="flex h-[43px] flex-none items-start justify-between rounded-sm border border-[#bfbfbf] bg-[#ebeae9] pt-[2px] pr-[10px] pl-2 leading-[19px] text-[#222]"
                    >
                        <div>
                            <p>{name}</p>
                            <p>是(全部)</p>
                        </div>
                        <button type="button" aria-label={`展开 ${name}`} className="mt-[5px]">
                            <Chevron />
                        </button>
                    </li>
                ))}
            </ul>
            <div className="mt-[24px] h-[93px] w-[6px] flex-none rounded-full bg-[#d0cfce]" />
        </div>
    </aside>
);

const UsedBadge: React.FC = (): React.ReactElement => (
    <span className="absolute top-[6px] left-[7px]">
        <Icon width={12} height={12}>
            <circle cx="6" cy="6" r="6" fill="#f2c811" />
            <path d="M3.500 6l2 2 3-3.500" stroke="#222" strokeWidth="1.500" />
        </Icon>
    </span>
);

const tables = [
    { name: "1-0", used: false },
    { name: "1-1", used: true },
    { name: "1-2", used: false },
    { name: "1-3", used: false },
    { name: "1-4", used: true },
];

type FieldItem = {
    name: string;
    checked: boolean;
    kind?: "column" | "date" | "hierarchy" | "sum" | "measure";
};

const fields: FieldItem[] = [
    { name: "顾客", checked: true },
    { name: "金额", checked: true, kind: "column" },
    { name: "商品ID", checked: false },
    { name: "时间", checked: true, kind: "date" },
    { name: "日期层次结构", checked: true, kind: "hierarchy" },
    { name: "数量", checked: false, kind: "sum" },
    { name: "销量", checked: true, kind: "measure" },
];

const fieldIcons: Record<string, React.ReactNode> = {
    column: (
        <>
            <path d="M.5 1.500h12v10H.5z" fill="#f3f2f1" stroke="#222" />
            <path d="M0 1h13v3H0z" fill="#222" />
            <path d="M4.500 3v9" stroke="#222" />
            <path d="M7 6h5v5H7z" fill="#ddd" stroke="#777" />
            <path d="M8 10l3-3" stroke="#444" />
        </>
    ),
    date: (
        <>
            <path d="M.5 2.500h11v10H.5zM.5 5.500h11M3.500 0v3M8.500 0v3" stroke="#222" />
            <path d="M2.500 7.500h8M2.500 10.500h8" stroke="#222" strokeWidth="1.500" strokeDasharray="2 1" />
        </>
    ),
    hierarchy: (
        <>
            <path d="M.5 .5h4v3h-4zM6.500 4.500h4v3h-4z" fill="#f2c811" stroke="#222" />
            <path d="M2.500 5v2M2.500 9v3M4 11.500h3" stroke="#222" strokeDasharray="2 1" />
        </>
    ),
    sum: <path d="M10.500 4.500V2.500H2l4 4.500-4 4.500h8.500V9.500" stroke="#222" strokeWidth="1.200" />,
    measure: (
        <>
            <path d="M2 1h9v12H2z" fill="#222" />
            <path d="M4 3h5v1.500H4z" fill="#fff" />
            <path d="M4 6.500h5M4 8.500h5M4 10.500h5" stroke="#fff" strokeDasharray="1 1" />
        </>
    ),
};

const FieldsPane: React.FC = (): React.ReactElement => (
    <aside className="flex w-[167px] flex-none flex-col overflow-hidden border-l border-[#dcdcdc] bg-[#f3f2f1]">
        <div className="mt-3 -mr-[2px] flex flex-none items-center justify-between pl-3 leading-5">
            <h2 className="text-base font-medium text-[#333]">字段</h2>
            <button type="button" aria-label="折叠字段">
                <Icon width={7} height={12}>
                    <path d="M.5 .5L6 6l-5.500 5.500" stroke="#444" />
                </Icon>
            </button>
        </div>
        <div className="border-b border-[#dcdcdc] pt-4 pb-1 pl-1">
            <label className="flex h-[30px] items-center gap-2 rounded-l-sm border border-r-0 border-[#c8c6c4] bg-white pl-[11px]">
                <Icon width={16} height={16}>
                    <circle cx="10" cy="6" r="5" stroke="#333" />
                    <path d="M6.500 9.500L.5 15.500" stroke="#333" />
                </Icon>
                <input type="search" aria-label="搜索" placeholder="搜索" className="w-full min-w-0 text-[13px] outline-none placeholder:text-[#444]" />
            </label>
        </div>
        <ul className="mt-[9px] flex-none">
            {tables.map((table) => (
                <li
                    key={table.name}
                    className={clsx("flex h-[27px] items-center gap-[7px] pl-1", table.name === "1-4" && "bg-[#d2d0ce]")}
                >
                    <button type="button" aria-label={`展开 ${table.name}`}>
                        <Chevron up={table.name === "1-4"} />
                    </button>
                    <span className="relative">
                        <Icon width={13} height={12}>
                            <path d="M.5 .5h12v11H.5zM4.500 3v9M8.500 3v9M1 5.500h12M1 8.500h12" stroke="#222" />
                            <path d="M0 0h13v3H0z" fill="#222" />
                        </Icon>
                        {table.used && <UsedBadge />}
                    </span>
                    <span className="pl-[5px] text-[#333]">{table.name}</span>
                </li>
            ))}
        </ul>
        <ul className="mt-[5px] flex-none">
            {fields.map((field) => {
                const expandable = field.kind === "date" || field.kind === "hierarchy";

                return (
                    <li
                        key={field.name}
                        className={clsx(
                            "flex h-6 items-center",
                            field.kind === "hierarchy" ? "pl-5" : "pl-3",
                            field.name === "金额" && "bg-[#d2d0ce]"
                        )}
                    >
                        <span className="w-5 flex-none">
                            {expandable && (
                                <button type="button" aria-label={`展开 ${field.name}`} className="block">
                                    <Chevron up={field.kind === "date"} />
                                </button>
                            )}
                        </span>
                        <label className="flex items-center whitespace-nowrap text-[#333]">
                            <span className="grid">
                                <input
                                    type="checkbox"
                                    defaultChecked={field.checked}
                                    className="peer col-start-1 row-start-1 h-3 w-3 appearance-none rounded-xs border border-[#c8c6c4] bg-white checked:border-[#f2c811] checked:bg-[#f2c811]"
                                />
                                <span className="pointer-events-none invisible col-start-1 row-start-1 peer-checked:visible">
                                    <Icon width={12} height={12}>
                                        <path d="M2 6l3 3 5.500-6" stroke="#333" strokeWidth="1.300" />
                                    </Icon>
                                </span>
                            </span>
                            <span className="relative ml-[3px] h-[14px] w-[22px]">
                                {field.kind && (
                                    <Icon width={13} height={14}>
                                        {fieldIcons[field.kind]}
                                    </Icon>
                                )}
                                {expandable && <UsedBadge />}
                            </span>
                            <span className={clsx(expandable && "font-bold")}>{field.name}</span>
                        </label>
                    </li>
                );
            })}
        </ul>
    </aside>
);

const inkStrokes = [
    "M122 50C125 51 128 52 131 53M134 51C128 49 121 54 118 61C116 67 114 70 110 71C108 82 107 97 110 109C112 115 116 113 117 118C120 122 122 125 125 125C129 124 129 118 132 112C135 97 136 78 135 64C134 57 131 54 128 52",
    "M175 138C182 143 188 145 195 147L222 152M116 160C121 157 124 154 128 152C142 152 160 150 176 148C190 146 205 148 222 151C250 155 277 162 300 175C308 177 316 182 317 194C319 205 311 215 302 223C294 231 280 230 262 230C240 229 215 225 195 221C165 216 148 206 130 196C119 188 110 182 110 174C110 165 117 157 125 155",
    "M953 416C949 410 943 413 938 412C922 409 908 410 895 407C886 408 882 404 873 404C864 402 857 403 853 406C850 412 850 422 848 437C865 439 882 443 900 443C920 444 938 448 955 446C967 445 967 438 964 430C961 423 955 421 949 419L946 414",
];

const App: React.FC = (): React.ReactElement => (
    <div className="relative flex h-screen w-full flex-col overflow-hidden bg-white font-['Open_Sans','Noto_Sans_CJK_SC',sans-serif] text-xs text-[#333]">
        <TitleBar />
        <TabRow />
        <Ribbon />
        <div className="flex min-h-0 flex-1">
            <NavRail />
            <div className="flex min-w-0 flex-1 font-['Roboto','Noto_Sans_CJK_SC',sans-serif]">
                <Canvas />
            </div>
            <VisualPane />
            <FieldsPane />
        </div>
        <footer className="flex h-2 flex-none items-end gap-[13px] border-t border-[#c8c8c8] bg-[#f3f2f1] pl-7">
            <span className="h-px w-[11px] bg-[#555]" />
            <span className="h-px w-2 bg-[#888]" />
            <span className="h-px w-[11px] bg-[#555]" />
        </footer>
        <div className="absolute -bottom-[7px] -left-[20px] flex h-[39px] w-[39px] items-center justify-end rounded-full border-2 border-white bg-linear-to-b from-[#7fdc86] to-[#35b84a] pr-[2px] font-bold text-white shadow-[0_0_0_1px_#999]">
            68
        </div>
        <p className="pointer-events-none absolute right-[9px] bottom-2 font-['Liberation_Sans',sans-serif] text-base leading-5 text-white/60 [text-shadow:1px_1px_1px_#bbb]">
            https://blog.csdn.net/AI_LX
        </p>
        <svg width="1010" height="714" fill="none" className="pointer-events-none absolute top-0 left-0" aria-hidden>
            {inkStrokes.map((stroke) => (
                <path key={stroke} d={stroke} stroke="#0a0af0" strokeWidth="1.800" strokeLinecap="round" />
            ))}
        </svg>
    </div>
);

export default App;
